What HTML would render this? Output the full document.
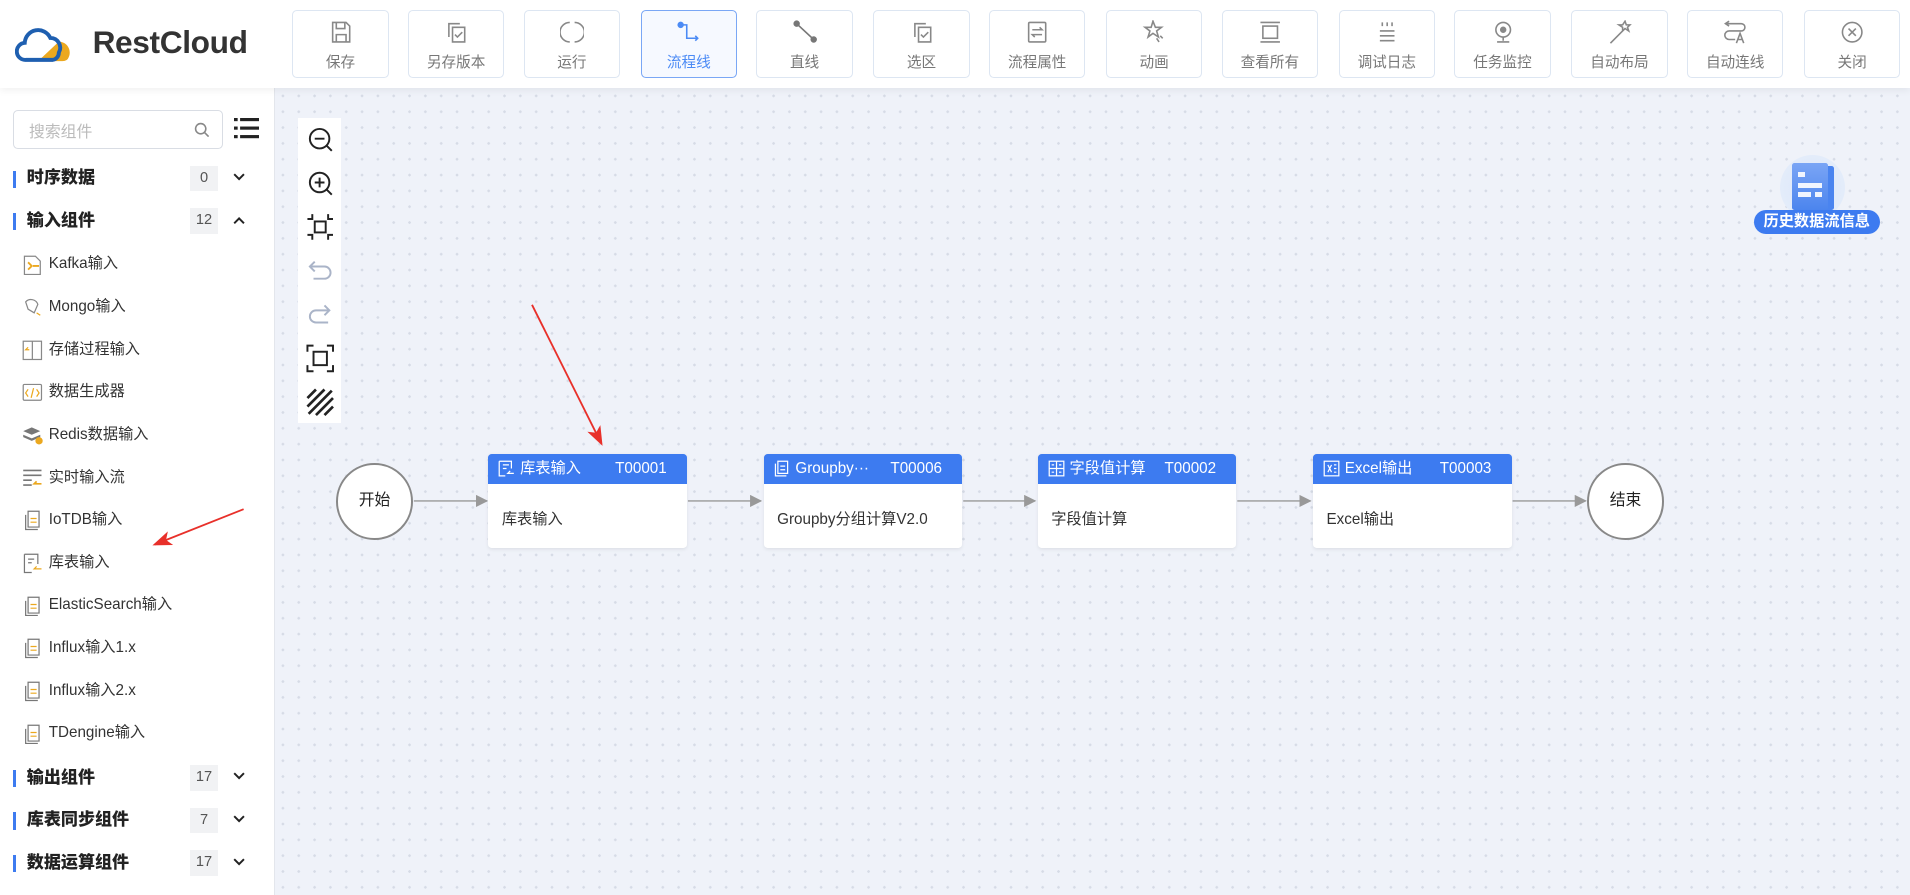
<!DOCTYPE html>
<html><head><meta charset="utf-8"><style>
*{box-sizing:border-box;margin:0;padding:0}
html,body{width:1910px;height:895px;overflow:hidden}
body{font-family:"Liberation Sans","Noto Sans CJK SC",sans-serif;background:#fff}
#w{zoom:1.2181;width:1568px;height:735px;position:relative;overflow:hidden;background:#fff}
.hdr{position:absolute;left:0;top:0;width:1568px;height:72px;background:#fff;box-shadow:0 2px 6px rgba(0,0,0,.06);z-index:2}
.btn{position:absolute;top:8px;width:79px;height:56px;border:1px solid #dde6f2;border-radius:4px;background:#fff;text-align:center;color:#777;font-size:12px}
.btn svg{position:absolute;left:29px;top:8px}
.btn span{position:absolute;left:0;right:0;top:33px}
.btn.act{border-color:#7aa7f5;background:#f6f9ff;color:#4c8bf5}
.side{position:absolute;left:0;top:72px;width:226px;height:663px;background:#fff;border-right:1px solid #e3e6ec}
.canvas{position:absolute;left:226px;top:72px;width:1342px;height:663px;background-color:#eff2f9;background-image:radial-gradient(#d6dbe6 1px,transparent 1.2px);background-size:13px 13px}
.search{position:absolute;left:11px;top:18px;width:172px;height:32px;border:1px solid #d9dde4;border-radius:4px;color:#bbb;font-size:13px;padding:7px 12px}
.cat{position:absolute;left:0;width:226px;height:20px;font-size:14px;font-weight:bold;color:#222}
.cat:before{content:"";position:absolute;left:11px;top:3px;width:2px;height:14px;background:#3d7bf0}
.cat b{position:absolute;left:22px;top:-3px}
.cat i{position:absolute;left:156px;top:-1px;width:23px;height:21px;background:#f1f2f4;font-style:normal;font-weight:normal;color:#555;font-size:12px;text-align:center;line-height:21px}
.cat svg{position:absolute;left:191px;top:5px}
.item{position:absolute;left:18px;font-size:12.5px;color:#333;height:18px;line-height:18px}
.item svg{position:absolute;left:0;top:1px}
.item span{position:absolute;left:22px;white-space:nowrap}
.node{position:absolute;top:301px;width:163px;height:77px;background:#fff;border-radius:3px;box-shadow:0 1px 3px rgba(0,0,0,.08)}
.node .h{height:24px;background:#3d7bf0;border-radius:3px 3px 0 0;color:#fff;font-size:12.5px;line-height:24px;position:relative}
.node .h svg{position:absolute;left:8px;top:5px}
.node .h .t{position:absolute;left:26px}
.node .h .c{position:absolute;left:104px}
.node .b{font-size:12.5px;color:#333;padding:19px 11px}
.circ{position:absolute;top:308px;width:63px;height:63px;border:2px solid #888;border-radius:50%;background:#fff;text-align:center;line-height:59px;font-size:13px;color:#222}
</style></head><body><div id="w">
<div class="hdr">
<svg style="position:absolute;left:12px;top:22px" width="50" height="30" viewBox="0 0 50 30"><path d="M36 12 a9 9 0 0 1 8 13 q-1 3 -5 3 h-20z" fill="#eba81f"/><path d="M9 27 a7 7 0 0 1 -1 -14 a11 11 0 0 1 21 -4 a8 8 0 0 1 7 12 a6 6 0 0 1 -5 6z" fill="none" stroke="#1e5fb0" stroke-width="3.2"/></svg>
<div style="position:absolute;left:76px;top:20px;font-size:26px;font-weight:bold;color:#333;letter-spacing:-.3px">RestCloud</div>
<div class="btn" style="left:240px"><svg width="20" height="20" viewBox="0 0 20 20" fill="none" stroke="#888" stroke-width="1.3"><path d="M3 2h11l3 3v13H3z M6 2v5h7V2 M6 18v-6h8v6"/></svg><span>保存</span></div>
<div class="btn" style="left:335px"><svg width="20" height="20" viewBox="0 0 20 20" fill="none" stroke="#888" stroke-width="1.3"><path d="M4 14V3h9 M7 6h10v12H7z M9 12l2 2 4-4"/></svg><span>另存版本</span></div>
<div class="btn" style="left:430px"><svg width="20" height="20" viewBox="0 0 20 20" fill="none" stroke="#888" stroke-width="1.3"><path d="M8 2a8 8 0 0 0 0 16 M12 2a8 8 0 0 1 0 16"/></svg><span>运行</span></div>
<div class="btn act" style="left:526px"><svg width="20" height="20" viewBox="0 0 20 20" fill="none" stroke="#4c8bf5" stroke-width="1.3"><circle cx="3" cy="4" r="2" fill="#4c8bf5"/><path d="M3 4h5v11h9 M15 13l2 2-2 2"/></svg><span>流程线</span></div>
<div class="btn" style="left:621px"><svg width="20" height="20" viewBox="0 0 20 20" fill="none" stroke="#777" stroke-width="1.3"><circle cx="3" cy="3" r="2" fill="#777"/><circle cx="17" cy="16" r="2" fill="#777"/><path d="M3 3l14 13"/></svg><span>直线</span></div>
<div class="btn" style="left:717px"><svg width="20" height="20" viewBox="0 0 20 20" fill="none" stroke="#888" stroke-width="1.3"><path d="M4 14V3h9 M7 6h10v12H7z M9 12l2 2 4-4"/></svg><span>选区</span></div>
<div class="btn" style="left:812px"><svg width="20" height="20" viewBox="0 0 20 20" fill="none" stroke="#888" stroke-width="1.3"><rect x="3" y="2" width="14" height="16" rx="1"/><path d="M6 8h8l-2-2 M14 12H6l2 2"/></svg><span>流程属性</span></div>
<div class="btn" style="left:908px"><svg width="20" height="20" viewBox="0 0 20 20" fill="none" stroke="#888" stroke-width="1.3"><path d="M9 1l2 5h5l-4 3 1.5 5L9 11l-4 3 1.5-5-4-3h5z M12 15l2 3 M15 13l2 2"/></svg><span>动画</span></div>
<div class="btn" style="left:1003px"><svg width="20" height="20" viewBox="0 0 20 20" fill="none" stroke="#888" stroke-width="1.3"><path d="M2 2h16 M2 18h16"/><rect x="4" y="5" width="12" height="10"/></svg><span>查看所有</span></div>
<div class="btn" style="left:1099px"><svg width="20" height="20" viewBox="0 0 20 20" fill="none" stroke="#888" stroke-width="1.3"><path d="M6 2v3 M10 2v3 M14 2v3 M4 9h12 M4 13h12 M4 17h12"/></svg><span>调试日志</span></div>
<div class="btn" style="left:1194px"><svg width="20" height="20" viewBox="0 0 20 20" fill="none" stroke="#888" stroke-width="1.3"><circle cx="10" cy="8" r="6"/><circle cx="10" cy="8" r="2" fill="#888"/><path d="M10 14v3 M5 18h10"/></svg><span>任务监控</span></div>
<div class="btn" style="left:1290px"><svg width="20" height="20" viewBox="0 0 20 20" fill="none" stroke="#888" stroke-width="1.3"><path d="M2 19l10-10 M14 1l1 3h3l-2 2 1 3-3-2-2 2v-3l-3-2h3z"/></svg><span>自动布局</span></div>
<div class="btn" style="left:1385px"><svg width="20" height="20" viewBox="0 0 20 20" fill="none" stroke="#888" stroke-width="1.3"><path d="M5 1L2 3l3 2 M2 3h13a3 3 0 0 1 0 6H5a3 3 0 0 0 0 7h5 M11 19l3-8 3 8 M12 16h4"/></svg><span>自动连线</span></div>
<div class="btn" style="left:1481px"><svg width="20" height="20" viewBox="0 0 20 20" fill="none" stroke="#888" stroke-width="1.3"><circle cx="10" cy="10" r="8"/><path d="M7 7l6 6 M13 7l-6 6"/></svg><span>关闭</span></div>
</div>
<div class="side">
<div class="search">搜索组件<svg style="position:absolute;right:10px;top:9px" width="13" height="13" viewBox="0 0 13 13" fill="none" stroke="#888" stroke-width="1.3"><circle cx="5.5" cy="5.5" r="4.2"/><path d="M8.5 8.5l3.5 3.5"/></svg></div>
<svg style="position:absolute;left:192px;top:25px" width="21" height="17" viewBox="0 0 21 17" fill="#222"><rect x="0" y="0" width="3" height="2.6"/><rect x="5" y="0" width="16" height="2.6"/><rect x="0" y="7" width="3" height="2.6"/><rect x="5" y="7" width="16" height="2.6"/><rect x="0" y="14" width="3" height="2.6"/><rect x="5" y="14" width="16" height="2.6"/></svg>
<div class="cat" style="top:65px"><b>时序数据</b><i>0</i><svg width="10" height="7" viewBox="0 0 10 7" fill="none" stroke="#222" stroke-width="1.6"><path d="M1 1l4 4 4-4"/></svg></div>
<div class="cat" style="top:100px"><b>输入组件</b><i>12</i><svg width="10" height="7" viewBox="0 0 10 7" fill="none" stroke="#222" stroke-width="1.6"><path d="M1 6l4-4 4 4"/></svg></div>
<div class="item" style="top:136px"><svg width="17" height="17" viewBox="0 0 17 17" fill="none" stroke="#888"><path d="M2 1h9l4 4v11H2z"/><path d="M5 6l3 3-3 3 M9 9h5" stroke="#eba81f" stroke-width="1.5"/></svg><span>Kafka输入</span></div>
<div class="item" style="top:171px"><svg width="17" height="17" viewBox="0 0 17 17" fill="none" stroke="#888"><path d="M3 4a6 6 0 0 1 10 2l-3 7-5-3z"/><path d="M12 13l3 2" stroke="#eba81f"/></svg><span>Mongo输入</span></div>
<div class="item" style="top:206px"><svg width="17" height="17" viewBox="0 0 17 17" fill="none" stroke="#888"><rect x="1" y="1" width="15" height="15"/><path d="M8.5 1v15"/><path d="M6 8H3l2-2" stroke="#eba81f"/></svg><span>存储过程输入</span></div>
<div class="item" style="top:241px"><svg width="17" height="17" viewBox="0 0 17 17" fill="none" stroke="#888"><rect x="1" y="2" width="15" height="13" rx="1"/><path d="M5 6l-2 3 2 3 M12 6l2 3-2 3 M9.5 5l-2 8" stroke="#eba81f"/></svg><span>数据生成器</span></div>
<div class="item" style="top:276px"><svg width="17" height="17" viewBox="0 0 17 17" fill="#777"><path d="M1 5l7-3 7 3-7 3z M1 8l7 3 7-3v2l-7 3-7-3z"/><circle cx="14" cy="13" r="3" fill="#eba81f"/></svg><span>Redis数据输入</span></div>
<div class="item" style="top:311px"><svg width="17" height="17" viewBox="0 0 17 17" fill="none" stroke="#777" stroke-width="1.4"><path d="M1 2h15 M1 6h15 M1 10h7 M1 14h7"/><path d="M16 13h-6l2-2" stroke="#eba81f"/></svg><span>实时输入流</span></div>
<div class="item" style="top:346px"><svg width="17" height="17" viewBox="0 0 17 17" fill="none" stroke="#777"><path d="M3 4v12h10 M5 1h9v13H5z"/><path d="M7 7h5 M7 10h5" stroke="#eba81f"/></svg><span>IoTDB输入</span></div>
<div class="item" style="top:381px"><svg width="17" height="17" viewBox="0 0 17 17" fill="none" stroke="#777"><path d="M2 1h11v8 M2 1v15h6 M5 5h5 M5 8h3"/><path d="M16 13h-6l2-2" stroke="#eba81f"/></svg><span>库表输入</span></div>
<div class="item" style="top:416px"><svg width="17" height="17" viewBox="0 0 17 17" fill="none" stroke="#777"><path d="M3 4v12h10 M5 1h9v13H5z"/><path d="M7 7h5 M7 10h5" stroke="#eba81f"/></svg><span>ElasticSearch输入</span></div>
<div class="item" style="top:451px"><svg width="17" height="17" viewBox="0 0 17 17" fill="none" stroke="#777"><path d="M3 4v12h10 M5 1h9v13H5z"/><path d="M7 7h5 M7 10h5" stroke="#eba81f"/></svg><span>Influx输入1.x</span></div>
<div class="item" style="top:486px"><svg width="17" height="17" viewBox="0 0 17 17" fill="none" stroke="#777"><path d="M3 4v12h10 M5 1h9v13H5z"/><path d="M7 7h5 M7 10h5" stroke="#eba81f"/></svg><span>Influx输入2.x</span></div>
<div class="item" style="top:521px"><svg width="17" height="17" viewBox="0 0 17 17" fill="none" stroke="#777"><path d="M3 4v12h10 M5 1h9v13H5z"/><path d="M7 7h5 M7 10h5" stroke="#eba81f"/></svg><span>TDengine输入</span></div>
<div class="cat" style="top:557px"><b>输出组件</b><i>17</i><svg width="10" height="7" viewBox="0 0 10 7" fill="none" stroke="#222" stroke-width="1.6"><path d="M1 1l4 4 4-4"/></svg></div>
<div class="cat" style="top:592px"><b>库表同步组件</b><i>7</i><svg width="10" height="7" viewBox="0 0 10 7" fill="none" stroke="#222" stroke-width="1.6"><path d="M1 1l4 4 4-4"/></svg></div>
<div class="cat" style="top:627px"><b>数据运算组件</b><i>17</i><svg width="10" height="7" viewBox="0 0 10 7" fill="none" stroke="#222" stroke-width="1.6"><path d="M1 1l4 4 4-4"/></svg></div>
</div>
<div class="canvas">
<div style="position:absolute;left:19px;top:25px;width:35px;height:250px;background:#fff"></div>
<svg style="position:absolute;left:24px;top:30px" width="26" height="240" viewBox="0 0 26 240" fill="none" stroke="#222" stroke-width="1.6">
<circle cx="12" cy="12" r="8"/><path d="M18 18l4 4 M8 12h8"/>
<g transform="translate(0,36)"><circle cx="12" cy="12" r="8"/><path d="M18 18l4 4 M8 12h8 M12 8v8"/></g>
<g transform="translate(0,72)"><rect x="8" y="8" width="9" height="9"/><path d="M2 6h4V2 M23 6h-4V2 M2 19h4v4 M23 19h-4v4"/></g>
<g transform="translate(0,108)" stroke="#aab4c8"><path d="M8 5L4 9l4 4 M4 9h12a5 5 0 0 1 0 10H7"/></g>
<g transform="translate(0,144)" stroke="#aab4c8"><path d="M16 5l4 4-4 4 M20 9H9a5 5 0 0 0 0 10h10"/></g>
<g transform="translate(0,180)"><rect x="7" y="7" width="11" height="11"/><path d="M2 7V2h5 M18 2h5v5 M2 18v5h5 M18 23h5v-5"/></g>
<g transform="translate(0,216)" stroke-width="2.2"><path d="M2 9l7-7 M2 16l14-14 M3 22l19-19 M9 23l14-14 M16 23l7-7"/></g>
</svg>
<svg style="position:absolute;left:0;top:0" width="1342" height="663">
<defs><marker id="a" markerWidth="10" markerHeight="10" refX="9" refY="5" orient="auto" markerUnits="userSpaceOnUse"><path d="M0 0L10 5 0 10z" fill="#999"/></marker>
<marker id="r" markerWidth="16" markerHeight="12" refX="14" refY="6" orient="auto" markerUnits="userSpaceOnUse"><path d="M0 0L16 6 0 12 4 6z" fill="#e8302a"/></marker></defs>
<g stroke="#999" stroke-width="1.2" marker-end="url(#a)"><path d="M114 339H174"/><path d="M339 339H399"/><path d="M565 339H624"/><path d="M790 339H850"/><path d="M1016 339H1076"/></g>
<path d="M211 178L268 292" stroke="#e8302a" stroke-width="1.5" marker-end="url(#r)"/>
</svg>
<div class="circ" style="left:50px">开始</div>
<div class="node" style="left:175px"><div class="h"><svg width="14" height="14" viewBox="0 0 14 14" fill="none" stroke="#fff"><path d="M1 1h10v6 M1 1v12h5 M4 4h5 M4 7h3 M13 11H8l2-2"/></svg><span class="t">库表输入</span><span class="c">T00001</span></div><div class="b">库表输入</div></div>
<div class="node" style="left:401px"><div class="h"><svg width="14" height="14" viewBox="0 0 14 14" fill="none" stroke="#fff"><path d="M2 3v10h9 M4 1h8v10H4z M6 5h4 M6 8h4"/></svg><span class="t">Groupby···</span><span class="c">T00006</span></div><div class="b">Groupby分组计算V2.0</div></div>
<div class="node" style="left:626px"><div class="h"><svg width="14" height="14" viewBox="0 0 14 14" fill="none" stroke="#fff"><rect x="1" y="1" width="12" height="12"/><path d="M7 1v12 M1 7h12 M3 4h2 M9 4h2 M3 10h2 M9 10h2"/></svg><span class="t">字段值计算</span><span class="c">T00002</span></div><div class="b">字段值计算</div></div>
<div class="node" style="left:852px"><div class="h"><svg width="14" height="14" viewBox="0 0 14 14" fill="none" stroke="#fff"><rect x="1" y="1" width="12" height="12"/><path d="M4 4l3 6 M7 4l-3 6 M9 4h2 M9 7h2 M9 10h2"/></svg><span class="t">Excel输出</span><span class="c">T00003</span></div><div class="b">Excel输出</div></div>
<div class="circ" style="left:1077px">结束</div>
<div style="position:absolute;left:1235px;top:55px;width:54px;height:54px;border-radius:50%;background:radial-gradient(#dbe7fb,#e7eefa)"></div>
<div style="position:absolute;left:1250px;top:64px;width:30px;height:36px;background:#4a84ef;border-radius:2px"></div>
<div style="position:absolute;left:1245px;top:62px;width:30px;height:38px;background:linear-gradient(#7aa5f5,#4c85ee);border-radius:2px"></div>
<div style="position:absolute;left:1250px;top:69px;width:6px;height:4px;background:#fff;opacity:.9"></div>
<div style="position:absolute;left:1250px;top:78px;width:20px;height:4px;background:#fff;opacity:.9"></div>
<div style="position:absolute;left:1250px;top:86px;width:11px;height:4px;background:#fff;opacity:.9"></div>
<div style="position:absolute;left:1264px;top:86px;width:6px;height:4px;background:#fff;opacity:.9"></div>
<div style="position:absolute;left:1214px;top:100px;width:103px;height:20px;border-radius:10px;background:#3d7bf0;color:#fff;font-size:12.5px;text-align:center;line-height:20px;font-weight:bold">历史数据流信息</div>
</div>
<svg style="position:absolute;left:0;top:0;z-index:3;pointer-events:none" width="1568" height="735">
<defs><marker id="r2" markerWidth="16" markerHeight="12" refX="14" refY="6" orient="auto" markerUnits="userSpaceOnUse"><path d="M0 0L16 6 0 12 4 6z" fill="#e8302a"/></marker></defs>
<path d="M200 418L127 447" stroke="#e8302a" stroke-width="1.5" marker-end="url(#r2)"/>
</svg>
</div></body></html>
